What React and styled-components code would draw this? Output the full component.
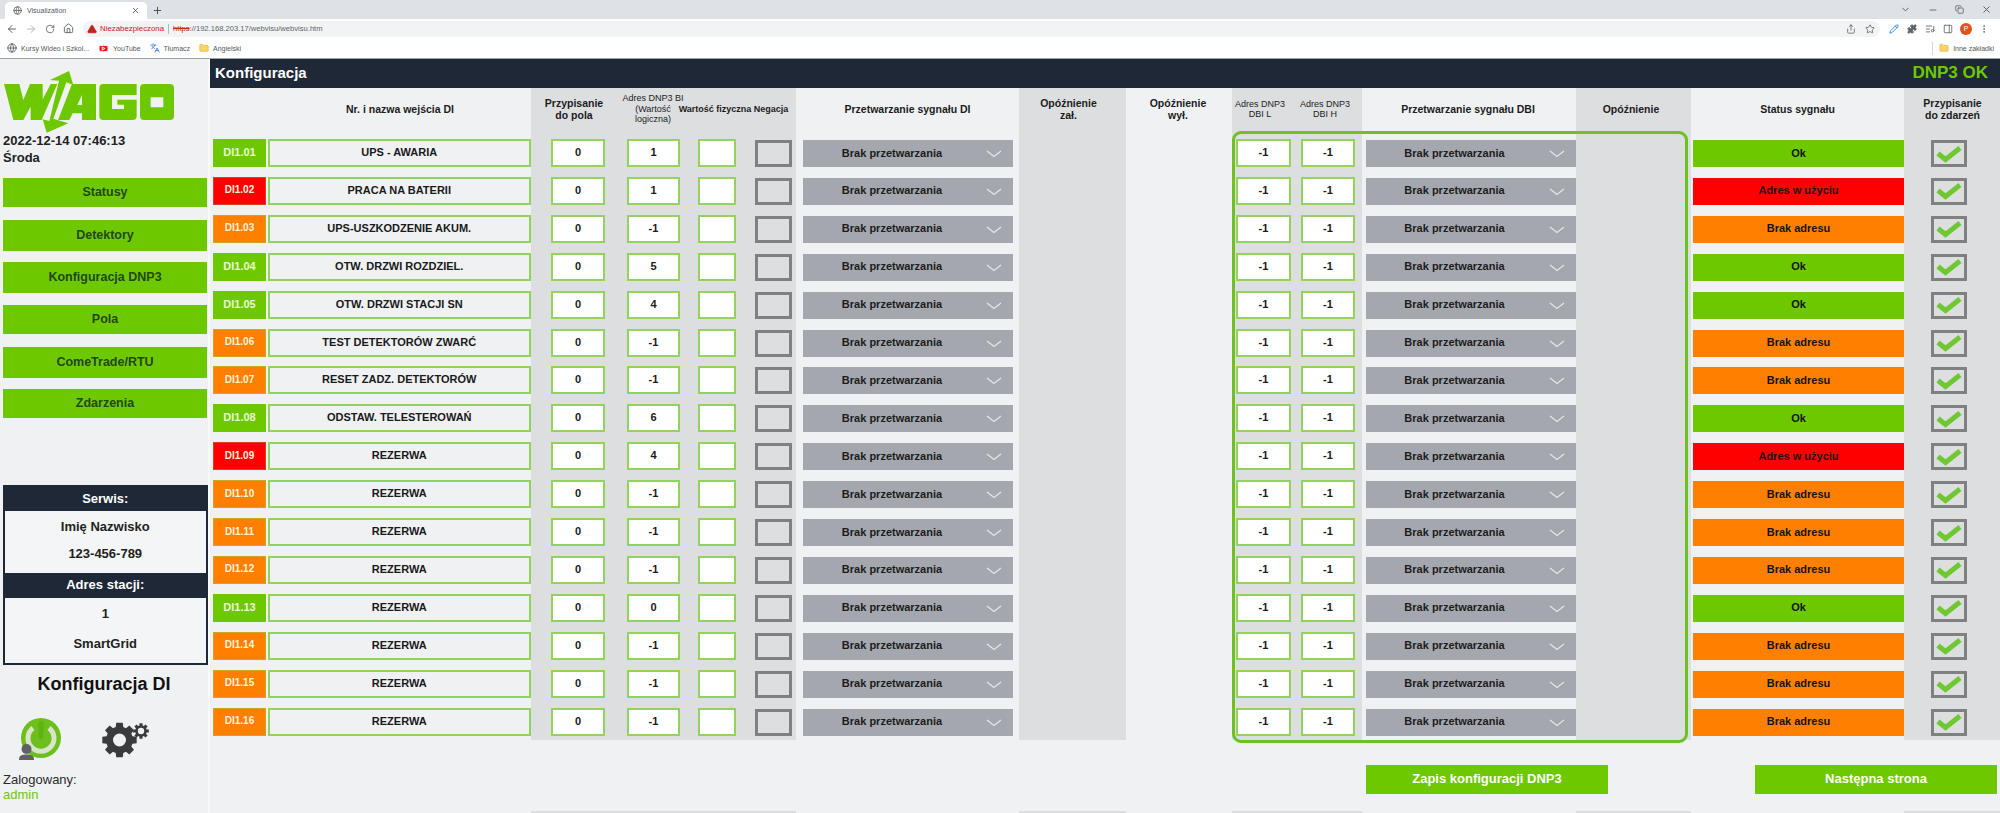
import React from "react";
import styled, { createGlobalStyle } from "styled-components";
import {
  ArrowLeft, ArrowRight, RotateCw, Home, Globe, Share, Star, Puzzle, X, Plus,
  ChevronDown, Minus, TriangleAlert, MoreVertical, ListMusic, Copy, PanelRight, Folder, Languages, Youtube, Pencil,
} from "lucide-react";

const GREEN = "#6ec800";
const BORDER_GREEN = "#93d25c";
const DARK = "#1e2836";
const LIGHT = "#eff1f3";
const GRAY = "#dcdee0";
const STATE_COLOR = { ok: GREEN, used: "#ff0000", none: "#ff8000" };
const STATE_TEXT = { ok: "Ok", used: "Adres w użyciu", none: "Brak adresu" };

const Global = createGlobalStyle`
  html, body { margin: 0; padding: 0; background: ${LIGHT}; }
  * { box-sizing: border-box; }
  body { font-family: "Liberation Sans", Arial, sans-serif; color: #1a1a1a; }
`;

const Page = styled.div`
  width: 2000px;
  height: 813px;
  overflow: hidden;
  display: flex;
  flex-direction: column;
`;

/* ---------- browser chrome ---------- */
const TabStrip = styled.div`
  height: 19px;
  background: #dee1e6;
  display: flex;
  align-items: flex-end;
  padding-left: 5px;
`;
const Tab = styled.div`
  width: 142px;
  height: 17px;
  background: #fff;
  border-radius: 5px 5px 0 0;
  display: flex;
  align-items: center;
  padding: 0 7px 0 8px;
  gap: 5px;
  font-size: 7px;
  color: #55585c;
`;
const TabTitle = styled.span`
  flex: 1;
`;
const NewTab = styled.div`
  margin: 0 0 2px 3px;
  width: 14px;
  height: 14px;
  display: flex;
  align-items: center;
  justify-content: center;
  color: #444;
`;
const WindowControls = styled.div`
  margin-left: auto;
  height: 19px;
  display: flex;
  color: #55585c;
`;
const WindowButton = styled.div`
  width: 27px;
  display: flex;
  align-items: center;
  justify-content: center;
`;
const Toolbar = styled.div`
  height: 19px;
  background: #fff;
  display: flex;
  align-items: center;
  padding-left: 2px;
  color: #5f6368;
`;
const ToolIcon = styled.div`
  width: ${(p) => p.$w || 19}px;
  height: 16px;
  display: flex;
  align-items: center;
  justify-content: center;
  flex-shrink: 0;
`;
const Omnibox = styled.div`
  width: 1797px;
  margin: 0 5px 0 5px;
  height: 16px;
  border-radius: 8px;
  background: #f1f3f4;
  display: flex;
  align-items: center;
  padding: 0 1px 0 4px;
  font-size: 7.6px;
  color: #5f6368;
`;
const Insecure = styled.span`
  color: #c5221f;
  margin-left: 3px;
  font-size: 7.85px;
`;
const Divider = styled.span`
  width: 1px;
  height: 10px;
  background: #b5b7ba;
  margin: 0 4px;
`;
const Struck = styled.span`
  color: #c5221f;
  text-decoration: line-through;
`;
const OmniRight = styled.div`
  margin-left: auto;
  display: flex;
`;
const Avatar = styled.div`
  width: 12px;
  height: 12px;
  border-radius: 50%;
  background: #e8501a;
  color: #fff;
  font-size: 7px;
  display: flex;
  align-items: center;
  justify-content: center;
`;
const Bookmarks = styled.div`
  height: 21px;
  background: #fff;
  display: flex;
  align-items: center;
  padding: 0 6px 0 7px;
  font-size: 7px;
  color: #55585c;
  border-bottom: 1px solid #9aa0a6;
`;
const Bookmark = styled.div`
  display: flex;
  align-items: center;
  gap: 4px;
  margin-right: ${(p) => p.$mr ?? 9}px;
  white-space: nowrap;
`;
const BookmarkDivider = styled.span`
  margin-left: auto;
  width: 1px;
  height: 13px;
  background: #d5d7da;
  margin-right: 6px;
`;

/* ---------- app ---------- */
const Body = styled.div`
  flex: 1;
  display: flex;
  min-height: 0;
`;
const Sidebar = styled.aside`
  width: 208px;
  flex-shrink: 0;
  background: ${LIGHT};
  display: flex;
  flex-direction: column;
  padding-top: 11px;
`;
const SideGap = styled.div`
  width: 2px;
  background: #f8f9fa;
  flex-shrink: 0;
`;
const LogoSvg = styled.svg`
  display: block;
  overflow: visible;
`;
const DateLine = styled.div`
  font-size: 13px;
  font-weight: 700;
  line-height: 17px;
  padding-left: 3px;
  color: #222;
`;
const Nav = styled.nav`
  margin-top: 12px;
  display: flex;
  flex-direction: column;
  padding-left: 3px;
`;
const NavButton = styled.div`
  width: 204px;
  height: ${(p) => p.$h}px;
  margin-top: ${(p) => p.$mt || 0}px;
  padding-bottom: 1.5px;
  background: ${GREEN};
  color: #22480f;
  font-size: 12.5px;
  font-weight: 700;
  display: flex;
  align-items: center;
  justify-content: center;
`;
const ServiceBox = styled.section`
  margin: 67px 0 0 2.5px;
  width: 205.5px;
  height: 180px;
  border: 2px solid ${DARK};
  display: flex;
  flex-direction: column;
  background: #f4f5f6;
`;
const BoxTitle = styled.div`
  height: ${(p) => p.$h}px;
  padding-bottom: 1.5px;
  background: ${DARK};
  color: #fff;
  font-size: 13px;
  font-weight: 700;
  display: flex;
  align-items: center;
  justify-content: center;
`;
const BoxSection = styled.div`
  height: ${(p) => p.$h}px;
  padding-top: ${(p) => p.$pt || 0}px;
`;
const BoxLine = styled.div`
  height: ${(p) => p.$h}px;
  font-size: 13px;
  font-weight: 700;
  color: #222;
  display: flex;
  align-items: center;
  justify-content: center;
`;
const ScreenName = styled.div`
  margin-top: 9px;
  height: 20px;
  line-height: 20px;
  text-align: center;
  font-size: 18px;
  font-weight: 700;
  color: #111;
`;
const IconRow = styled.div`
  margin-top: 24px;
  height: 54px;
  display: flex;
  align-items: flex-start;
  padding-left: 17px;
  gap: 37px;
`;
const LoggedLabel = styled.div`
  font-size: 13px;
  line-height: 15px;
  padding-left: 3px;
  color: #2b2b2b;
`;
const LoggedUser = styled(LoggedLabel)`
  color: ${GREEN};
`;

const Main = styled.main`
  flex: 1;
  min-width: 0;
  display: flex;
  flex-direction: column;
`;
const TitleBar = styled.header`
  height: 29px;
  background: ${DARK};
  display: flex;
  align-items: center;
  justify-content: space-between;
  padding: 0 12px 2px 5px;
`;
const Title = styled.h1`
  margin: 0;
  font-size: 15px;
  font-weight: 700;
  color: #fff;
`;
const ConnState = styled.div`
  font-size: 17px;
  font-weight: 700;
  color: ${GREEN};
`;
const Table = styled.div`
  position: relative;
  height: 652px;
  display: flex;
`;
const Band = styled.div`
  width: ${(p) => p.$w}px;
  flex-shrink: 0;
  background: ${(p) => (p.$gray ? GRAY : LIGHT)};
  padding-left: ${(p) => p.$pl || 0}px;
`;
const HeadRow = styled.div`
  height: 51px;
  display: flex;
  margin-left: ${(p) => -(p.$pl || 0)}px;
`;
const HeadCell = styled.div`
  width: ${(p) => p.$w}px;
  flex-shrink: 0;
  height: 42px;
  display: flex;
  align-items: center;
  justify-content: center;
  text-align: center;
  white-space: nowrap;
  font-size: ${(p) => (p.$small ? 9 : 10.5)}px;
  font-weight: ${(p) => (p.$thin ? 400 : 700)};
  line-height: ${(p) => (p.$small ? 10.5 : 12.5)}px;
  color: #1c1c1c;
`;
const Rows = styled.div`
  display: flex;
  flex-direction: column;
  gap: 9.92px;
`;
const Row = styled.div`
  height: 28px;
  display: flex;
`;
const DiLabel = styled.div`
  width: 53px;
  margin-right: 1.5px;
  flex-shrink: 0;
  padding-bottom: 2px;
  background: ${(p) => STATE_COLOR[p.$state]};
  border: 1px solid ${(p) => (p.$state === "used" ? "#d8411d" : p.$state === "none" ? "#c9a62a" : GREEN)};
  color: ${(p) => (p.$state === "ok" ? "#e9f8d8" : "#fff3dc")};
  font-size: ${(p) => (p.$state === "ok" ? 11 : 10)}px;
  font-weight: 700;
  display: flex;
  align-items: center;
  justify-content: center;
`;
const NameField = styled.div`
  flex: 1;
  padding-bottom: 2px;
  border: 2px solid ${BORDER_GREEN};
  font-size: 11px;
  font-weight: 700;
  color: #1a1a1a;
  display: flex;
  align-items: center;
  justify-content: center;
`;
const ValueField = styled.div`
  width: ${(p) => p.$w}px;
  margin-left: ${(p) => p.$ml || 0}px;
  flex-shrink: 0;
  padding-bottom: 2px;
  background: #fff;
  border: 2px solid ${BORDER_GREEN};
  font-size: 11px;
  font-weight: 700;
  color: #1a1a1a;
  display: flex;
  align-items: center;
  justify-content: center;
`;
const CheckBox = styled.div`
  width: ${(p) => p.$w}px;
  height: 27px;
  margin: 1px 0 0 ${(p) => p.$ml || 0}px;
  flex-shrink: 0;
  border: 3px solid #808080;
  background: ${GRAY};
  display: flex;
  align-items: center;
  justify-content: center;
`;
const SelectBox = styled.div`
  width: 210px;
  height: 27px;
  margin-top: 1px;
  background: #a4a7ae;
  position: relative;
  display: flex;
  align-items: center;
  padding: 0 32px 2px 0;
  justify-content: center;
  font-size: 11px;
  font-weight: 700;
  color: #1c1c1c;
`;
const SelectArrow = styled.svg`
  position: absolute;
  right: 11px;
  top: 10px;
`;
const StatusCell = styled.div`
  width: 211px;
  height: 27px;
  margin-top: 1px;
  padding-bottom: 2px;
  background: ${(p) => STATE_COLOR[p.$state]};
  font-size: 11px;
  font-weight: 700;
  color: #141414;
  display: flex;
  align-items: center;
  justify-content: center;
`;
const DbiFrame = styled.div`
  position: absolute;
  left: 1021.5px;
  top: 43px;
  width: 456px;
  height: 612px;
  border: 3.5px solid #6fc020;
  border-radius: 9px;
  pointer-events: none;
`;
const Actions = styled.div`
  margin-top: 25px;
  height: 29px;
  display: flex;
  padding-left: 1156px;
  gap: 147px;
`;
const ActionButton = styled.div`
  width: 242px;
  padding-bottom: 2px;
  background: ${GREEN};
  color: #fff;
  font-size: 13px;
  font-weight: 700;
  display: flex;
  align-items: center;
  justify-content: center;
`;
const FootStrips = styled.div`
  margin-top: 17px;
  height: 2px;
  display: flex;
`;
const FootStrip = styled.div`
  width: ${(p) => p.$w}px;
  background: ${(p) => (p.$gray ? GRAY : LIGHT)};
`;

const BANDS = [
  [321, false], [265, true], [223, false], [107, true], [106, false], [130, true],
  [214, false], [115, true], [213, false], [96, true],
];

const ROWS = [
  ["01", "UPS - AWARIA", 1, "ok"],
  ["02", "PRACA NA BATERII", 1, "used"],
  ["03", "UPS-USZKODZENIE AKUM.", -1, "none"],
  ["04", "OTW. DRZWI ROZDZIEL.", 5, "ok"],
  ["05", "OTW. DRZWI STACJI SN", 4, "ok"],
  ["06", "TEST DETEKTORÓW ZWARĆ", -1, "none"],
  ["07", "RESET ZADZ. DETEKTORÓW", -1, "none"],
  ["08", "ODSTAW. TELESTEROWAŃ", 6, "ok"],
  ["09", "REZERWA", 4, "used"],
  ["10", "REZERWA", -1, "none"],
  ["11", "REZERWA", -1, "none"],
  ["12", "REZERWA", -1, "none"],
  ["13", "REZERWA", 0, "ok"],
  ["14", "REZERWA", -1, "none"],
  ["15", "REZERWA", -1, "none"],
  ["16", "REZERWA", -1, "none"],
];

function gearPath(cx, cy, ro, ri, rh, teeth) {
  let d = "";
  const step = (Math.PI * 2) / teeth;
  for (let i = 0; i < teeth; i++) {
    const a = i * step - Math.PI / 2;
    const pts = [
      [ri, a - step * 0.36],
      [ro, a - step * 0.24],
      [ro, a + step * 0.24],
      [ri, a + step * 0.36],
    ];
    pts.forEach(([r, t], j) => {
      const x = (cx + r * Math.cos(t)).toFixed(2);
      const y = (cy + r * Math.sin(t)).toFixed(2);
      d += `${i === 0 && j === 0 ? "M" : "L"}${x},${y} `;
    });
  }
  d += `Z M${cx + rh},${cy} A${rh},${rh} 0 1 0 ${cx - rh},${cy} A${rh},${rh} 0 1 0 ${cx + rh},${cy} Z`;
  return d;
}

const WagoLogo = () => (
  <LogoSvg width="180" height="62" viewBox="0 30 540 186">
    <g fill={GREEN} fillRule="evenodd">
      <polygon points="12,72 58,72 70,120 90,72 128,72 128,118 152,72 172,72 125,180 92,180 92,140 70,180 40,180" />
      <polygon points="207,33 220,75 199,67 160,176 205,190 140,218 128,178 148,183 177,62 150,60" />
      <path d="M216,72 H288 V180 H246 V160 H218 L208,180 H174 Z M246,105 V135 H232 Z" />
      <path d="M310,72 H410 V105 H336 V147 H372 V134 H352 V119 H410 V168 Q410,180 398,180 H310 Q298,180 298,168 V84 Q298,72 310,72 Z" />
      <path d="M432,72 H510 Q522,72 522,84 V168 Q522,180 510,180 H432 Q420,180 420,168 V84 Q420,72 432,72 Z M452,112 V142 H490 V112 Z" />
    </g>
  </LogoSvg>
);

const PowerUser = () => (
  <svg width="48" height="48" viewBox="0 0 48 48">
    <circle cx="24" cy="20" r="20" fill="#6dbf1c" />
    <path d="M16 10 A13 13 0 1 0 32 10" fill="none" stroke="#d8e5cb" strokeWidth="5" />
    <rect x="21.5" y="3" width="5" height="18" rx="2" fill="#5fb312" />
    <circle cx="9.5" cy="31" r="5" fill="#5f6163" />
    <path d="M2 42 C2 37 5 36.5 9.5 36.5 C14 36.5 17 37 17 42 Z" fill="#5f6163" />
  </svg>
);

const Gears = () => (
  <svg width="50" height="40" viewBox="0 0 50 40">
    <path fillRule="evenodd" fill="#3a3b3d" d={gearPath(17.5, 22, 17.5, 13.5, 6.5, 8)} />
    <path fillRule="evenodd" fill="#3a3b3d" d={gearPath(39, 13, 8, 5.8, 3.2, 8)} />
  </svg>
);

const Check = () => (
  <svg width="26" height="18" viewBox="0 0 26 18">
    <path d="M2 8.5 L9.5 14.5 L24 3" fill="none" stroke="#6fc832" strokeWidth="5" />
  </svg>
);

const Chevron = () => (
  <SelectArrow width="16" height="8" viewBox="0 0 16 8">
    <path d="M1 1 L8 6.5 L15 1" fill="none" stroke="#e6e8ea" strokeWidth="1.2" />
  </SelectArrow>
);

const BrowserChrome = () => (
  <>
    <TabStrip>
      <Tab>
        <Globe size={9} />
        <TabTitle>Visualization</TabTitle>
        <X size={9} color="#444" />
      </Tab>
      <NewTab><Plus size={11} /></NewTab>
      <WindowControls>
        <WindowButton><ChevronDown size={11} /></WindowButton>
        <WindowButton><Minus size={10} /></WindowButton>
        <WindowButton><Copy size={9} /></WindowButton>
        <WindowButton><X size={11} /></WindowButton>
      </WindowControls>
    </TabStrip>
    <Toolbar>
      <ToolIcon><ArrowLeft size={12} /></ToolIcon>
      <ToolIcon><ArrowRight size={12} color="#b6b9bd" /></ToolIcon>
      <ToolIcon><RotateCw size={10} /></ToolIcon>
      <ToolIcon><Home size={11} /></ToolIcon>
      <Omnibox>
        <TriangleAlert size={10} color="#c5221f" fill="#c5221f" stroke="#c5221f" />
        <Insecure>Niezabezpieczona</Insecure>
        <Divider />
        <Struck>https</Struck>
        ://192.168.203.17/webvisu/webvisu.htm
        <OmniRight>
          <ToolIcon><Share size={10} /></ToolIcon>
          <ToolIcon><Star size={10} /></ToolIcon>
        </OmniRight>
      </Omnibox>
      <ToolIcon $w={18}><Pencil size={10} color="#1a73e8" /></ToolIcon>
      <ToolIcon $w={18}><Puzzle size={10} fill="#5f6368" /></ToolIcon>
      <ToolIcon $w={18}><ListMusic size={10} /></ToolIcon>
      <ToolIcon $w={18}><PanelRight size={10} /></ToolIcon>
      <ToolIcon $w={18}><Avatar>P</Avatar></ToolIcon>
      <ToolIcon $w={18}><MoreVertical size={10} /></ToolIcon>
    </Toolbar>
    <Bookmarks>
      <Bookmark><Globe size={10} /><span>Kursy Wideo i Szkol...</span></Bookmark>
      <Bookmark><Youtube size={11} color="#fff" fill="#e02020" /><span>YouTube</span></Bookmark>
      <Bookmark><Languages size={10} color="#3b78e7" /><span>Tłumacz</span></Bookmark>
      <Bookmark><Folder size={10} color="#e8c24e" fill="#f6d36b" /><span>Angielski</span></Bookmark>
      <BookmarkDivider />
      <Bookmark $mr={0}><Folder size={10} color="#e8c24e" fill="#f6d36b" /><span>Inne zakładki</span></Bookmark>
    </Bookmarks>
  </>
);

const SideBar = () => (
  <Sidebar>
    <WagoLogo />
    <DateLine>2022-12-14 07:46:13</DateLine>
    <DateLine>Środa</DateLine>
    <Nav>
      <NavButton $h={29}>Statusy</NavButton>
      <NavButton $h={31} $mt={13}>Detektory</NavButton>
      <NavButton $h={31} $mt={11}>Konfiguracja DNP3</NavButton>
      <NavButton $h={29} $mt={12}>Pola</NavButton>
      <NavButton $h={31} $mt={13}>ComeTrade/RTU</NavButton>
      <NavButton $h={29} $mt={11}>Zdarzenia</NavButton>
    </Nav>
    <ServiceBox>
      <BoxTitle $h={24}>Serwis:</BoxTitle>
      <BoxSection $h={62} $pt={1.5}>
        <BoxLine $h={27}>Imię Nazwisko</BoxLine>
        <BoxLine $h={27}>123-456-789</BoxLine>
      </BoxSection>
      <BoxTitle $h={25}>Adres stacji:</BoxTitle>
      <BoxSection $h={65}>
        <BoxLine $h={30}>1</BoxLine>
        <BoxLine $h={30}>SmartGrid</BoxLine>
      </BoxSection>
    </ServiceBox>
    <ScreenName>Konfiguracja DI</ScreenName>
    <IconRow>
      <PowerUser />
      <Gears />
    </IconRow>
    <LoggedLabel>Zalogowany:</LoggedLabel>
    <LoggedUser>admin</LoggedUser>
  </Sidebar>
);

const RowList = ({ render }) => (
  <Rows>
    {ROWS.map((r) => (
      <Row key={r[0]}>{render(r)}</Row>
    ))}
  </Rows>
);

const ConfigTable = () => (
  <Table>
    <Band $w={321} $pl={3}>
      <HeadRow $pl={3}><HeadCell $w={380}>Nr. i nazwa wejścia DI</HeadCell></HeadRow>
      <RowList
        render={([id, name, , state]) => (
          <>
            <DiLabel $state={state}>DI1.{id}</DiLabel>
            <NameField>{name}</NameField>
          </>
        )}
      />
    </Band>
    <Band $w={265} $gray $pl={20}>
      <HeadRow $pl={20}>
        <HeadCell $w={86}>Przypisanie<br />do pola</HeadCell>
        <HeadCell $w={72} $small $thin>Adres DNP3 BI<br />(Wartość<br />logiczna)</HeadCell>
        <HeadCell $w={52} $small>Wartość fizyczna</HeadCell>
        <HeadCell $w={60} $small>Negacja</HeadCell>
      </HeadRow>
      <RowList
        render={([, , addr]) => (
          <>
            <ValueField $w={54}>0</ValueField>
            <ValueField $w={53} $ml={22}>{addr}</ValueField>
            <ValueField $w={38} $ml={18} />
            <CheckBox $w={37} $ml={19} />
          </>
        )}
      />
    </Band>
    <Band $w={223} $pl={7}>
      <HeadRow $pl={7}><HeadCell $w={223}>Przetwarzanie sygnału DI</HeadCell></HeadRow>
      <RowList render={() => <SelectBox>Brak przetwarzania<Chevron /></SelectBox>} />
    </Band>
    <Band $w={107} $gray>
      <HeadRow><HeadCell $w={99}>Opóźnienie<br />zał.</HeadCell></HeadRow>
    </Band>
    <Band $w={106}>
      <HeadRow><HeadCell $w={104}>Opóźnienie<br />wył.</HeadCell></HeadRow>
    </Band>
    <Band $w={130} $gray $pl={4}>
      <HeadRow $pl={4}>
        <HeadCell $w={56} $small $thin>Adres DNP3<br />DBI L</HeadCell>
        <HeadCell $w={74} $small $thin>Adres DNP3<br />DBI H</HeadCell>
      </HeadRow>
      <RowList
        render={() => (
          <>
            <ValueField $w={55}>-1</ValueField>
            <ValueField $w={54} $ml={10}>-1</ValueField>
          </>
        )}
      />
    </Band>
    <Band $w={214} $pl={3.5}>
      <HeadRow $pl={3.5}><HeadCell $w={212}>Przetwarzanie sygnału DBI</HeadCell></HeadRow>
      <RowList render={() => <SelectBox>Brak przetwarzania<Chevron /></SelectBox>} />
    </Band>
    <Band $w={115} $gray>
      <HeadRow><HeadCell $w={110}>Opóźnienie</HeadCell></HeadRow>
    </Band>
    <Band $w={213} $pl={2}>
      <HeadRow $pl={2}><HeadCell $w={213}>Status sygnału</HeadCell></HeadRow>
      <RowList render={([, , , state]) => <StatusCell $state={state}>{STATE_TEXT[state]}</StatusCell>} />
    </Band>
    <Band $w={96} $gray $pl={27}>
      <HeadRow $pl={27}><HeadCell $w={97}>Przypisanie<br />do zdarzeń</HeadCell></HeadRow>
      <RowList render={() => <CheckBox $w={36}><Check /></CheckBox>} />
    </Band>
    <DbiFrame />
  </Table>
);

export default function App() {
  return (
    <>
      <Global />
      <Page>
        <BrowserChrome />
        <Body>
          <SideBar />
          <SideGap />
          <Main>
            <TitleBar>
              <Title>Konfiguracja</Title>
              <ConnState>DNP3 OK</ConnState>
            </TitleBar>
            <ConfigTable />
            <Actions>
              <ActionButton>Zapis konfiguracji DNP3</ActionButton>
              <ActionButton>Następna strona</ActionButton>
            </Actions>
            <FootStrips>
              {BANDS.map(([w, gray], i) => (
                <FootStrip key={i} $w={w} $gray={gray} />
              ))}
            </FootStrips>
          </Main>
        </Body>
      </Page>
    </>
  );
}
